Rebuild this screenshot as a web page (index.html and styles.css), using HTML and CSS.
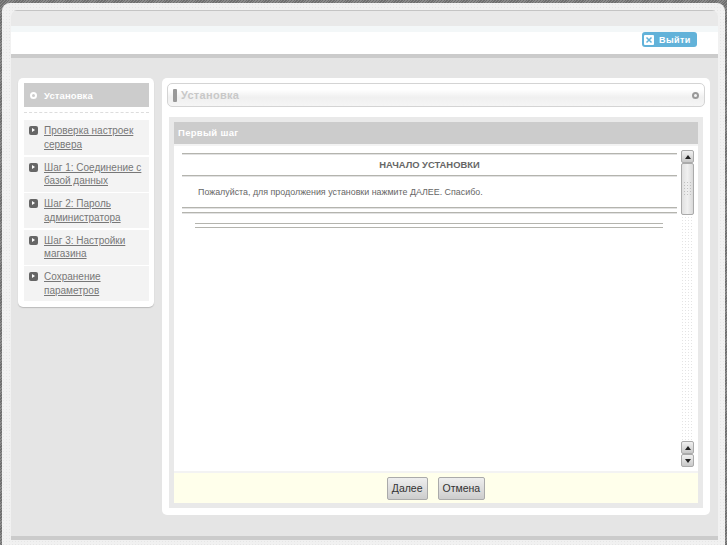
FILE: index.html
```html
<!DOCTYPE html>
<html lang="ru">
<head>
  <meta charset="UTF-8" />
  <title>Установка</title>
  <link rel="stylesheet" href="styles.css">
</head>
<body>
  <div class="frame">
    <div class="header">
      <div class="header-top"></div>
      <div class="header-bar">
        <a class="logout" href="#">
          <svg class="logout-icon" width="10" height="10" viewBox="0 0 10 10">
            <rect width="10" height="10" rx="1" fill="#fff"/>
            <path d="M2.5 2.5l5 5M7.5 2.5l-5 5" stroke="#62b2d9" stroke-width="1.5"/>
          </svg>
          Выйти
        </a>
      </div>
    </div>

    <div class="content">
      <div class="sidebar">
        <div class="side-head">
          <span class="side-dot"></span>
          Установка
        </div>
        <div class="side-sep"></div>
        <a class="side-item" href="#"><span class="side-icon"></span><span class="side-link">Проверка настроек сервера</span></a>
        <a class="side-item" href="#"><span class="side-icon"></span><span class="side-link">Шаг 1: Соединение с базой данных</span></a>
        <a class="side-item" href="#"><span class="side-icon"></span><span class="side-link">Шаг 2: Пароль администратора</span></a>
        <a class="side-item" href="#"><span class="side-icon"></span><span class="side-link">Шаг 3: Настройки магазина</span></a>
        <a class="side-item" href="#"><span class="side-icon"></span><span class="side-link">Сохранение параметров</span></a>
      </div>

      <div class="main">
        <div class="title-bar">
          <span class="title-mark"></span>
          <span class="title-text">Установка</span>
          <span class="title-dot"></span>
        </div>

        <div class="panel">
          <div class="panel-head">Первый шаг</div>
          <div class="panel-body">
            <div class="text-area">
              <div class="rule"></div>
              <div class="start-title">НАЧАЛО УСТАНОВКИ</div>
              <div class="rule"></div>
              <p class="start-text">Пожалуйста, для продолжения установки нажмите ДАЛЕЕ. Спасибо.</p>
              <div class="rule"></div>
              <div class="rule rule-second"></div>
              <div class="rule-inset"></div>
            </div>
            <div class="scrollbar">
              <div class="scroll-btn"><span class="arrow-up"></span></div>
              <div class="scroll-thumb">
                <span class="grip"></span>
              </div>
              <div class="scroll-track"></div>
              <div class="scroll-btn"><span class="arrow-up"></span></div>
              <div class="scroll-btn"><span class="arrow-down"></span></div>
            </div>
          </div>
          <div class="panel-foot">
            <button class="btn">Далее</button>
            <button class="btn">Отмена</button>
          </div>
        </div>
      </div>
    </div>
  </div>
</body>
</html>
```

FILE: styles.css
```css
/* ---------------- GENERAL ---------------- */
html, body {
  margin: 0;
  height: 100%;
  overflow: hidden;
}

body {
  background: repeating-linear-gradient(135deg, #6f6f6f 0, #6f6f6f 1px, #8a8a8a 1px, #8a8a8a 2px);
  padding: 3px 2px 0 2px;
  box-sizing: border-box;
  font-family: "Liberation Sans", sans-serif;
}

.frame {
  height: 542px;
  box-sizing: border-box;
  padding: 7px 7px 0 9px;
  border-radius: 8px 8px 0 0;
  background-color: #f1f1f1;
  background-image: radial-gradient(#e6e6e6 1px, transparent 1px);
  background-size: 3px 3px;
}

/* ---------------- HEADER ---------------- */
.header {
  height: 44px;
  background: #fff;
  border-radius: 6px 6px 0 0;
  overflow: hidden;
}

.header-top {
  height: 15px;
  background: #e9e9e9;
  border-top: 1px solid #c4c4c4;
  box-shadow: 0 6px 0 #f3f7f8;
}

.header-bar {
  display: flex;
  justify-content: flex-end;
  padding: 6px 21px 0 0;
}

.logout {
  display: flex;
  align-items: center;
  gap: 5px;
  width: 55px;
  height: 15px;
  box-sizing: border-box;
  padding-left: 2px;
  background: #62b2d9;
  border-radius: 3px;
  color: #fff;
  font-size: 9px;
  font-weight: bold;
  letter-spacing: 0.4px;
  text-decoration: none;
}

/* ---------------- CONTENT ---------------- */
.content {
  display: flex;
  align-items: flex-start;
  gap: 8px;
  height: 486px;
  box-sizing: border-box;
  padding: 20px 8px 0 7px;
  background: #e5e5e5;
  border-top: 4px solid #cbcbcb;
  border-bottom: 4px solid #cbcbcb;
}

.sidebar {
  width: 136px;
  height: 229px;
  box-sizing: border-box;
  padding: 5px 5px 0 6px;
  background: #fff;
  border-radius: 5px;
  box-shadow: 0 1px 1px #bbb;
}

.side-head {
  display: flex;
  align-items: center;
  gap: 7px;
  height: 24px;
  padding-left: 6px;
  background: #ccc;
  color: #fff;
  font-size: 9.5px;
  font-weight: bold;
  letter-spacing: 0.1px;
}

.side-dot {
  width: 3px;
  height: 3px;
  border: 2px solid #fff;
  border-radius: 50%;
}

.side-sep {
  margin: 5px 0 7px 0;
  border-top: 1px dashed #ddd;
}

.side-item {
  display: flex;
  gap: 6px;
  height: 35px;
  box-sizing: border-box;
  margin-bottom: 1.5px;
  padding: 4px 5px 0 5px;
  background: #f3f3f3;
  color: #777;
  font-size: 10px;
  line-height: 13.5px;
  text-decoration: none;
}

.side-icon {
  flex: none;
  position: relative;
  width: 9px;
  height: 9px;
  margin-top: 2px;
  background: #666;
  border-radius: 2px;
}

.side-icon::after {
  content: "";
  position: absolute;
  left: 3px;
  top: 2px;
  border-left: 3px solid #fff;
  border-top: 2.5px solid transparent;
  border-bottom: 2.5px solid transparent;
}

.side-link {
  text-decoration: underline;
}

/* ---------------- MAIN ---------------- */
.main {
  width: 548px;
  height: 437px;
  box-sizing: border-box;
  padding: 5px;
  background: #fff;
  border-radius: 5px;
}

.title-bar {
  display: flex;
  align-items: center;
  height: 24px;
  box-sizing: border-box;
  padding: 0 5px 0 5px;
  border: 1px solid #d4d4d4;
  border-radius: 5px;
  background: linear-gradient(#fff 0, #fff 25%, #f0f0f0 60%, #f5f5f5 100%);
}

.title-mark {
  width: 4px;
  height: 13px;
  margin-right: 4px;
  background: #999;
  border-radius: 1px;
}

.title-text {
  flex: 1;
  color: #c8c8c8;
  font-size: 11px;
  font-weight: bold;
  letter-spacing: 0.3px;
}

.title-dot {
  width: 3px;
  height: 3px;
  border: 2px solid #999;
  border-radius: 50%;
}

.panel {
  margin: 10px 2px 0 2px;
  height: 391px;
  box-sizing: border-box;
  padding: 5px;
  background: #e9e9e9;
}

.panel-head {
  height: 22px;
  padding-left: 4px;
  background: #ccc;
  color: #fff;
  font-size: 9.5px;
  font-weight: bold;
  letter-spacing: 0.3px;
  line-height: 21px;
}

.panel-body {
  display: flex;
  height: 329px;
  box-sizing: border-box;
  padding: 4px 4px 4px 8px;
  background: #fff;
  border-top: 2px solid #f3f3f3;
  border-bottom: 2px solid #f3f3f3;
}

.text-area {
  flex: 1;
  padding: 3px 4px 0 0;
  color: #666;
}

.rule {
  height: 1px;
  background: #b4b4ae;
  border-bottom: 1px solid #e2e2e2;
}

.rule-second {
  margin-top: 3px;
}

.rule-inset {
  height: 1px;
  margin: 9px 14px 0 13px;
  border-top: 1px solid #b4b4ae;
  border-bottom: 1px solid #b4b4ae;
  padding-top: 2px;
}

.start-title {
  height: 20px;
  color: #666;
  font-size: 9.4px;
  font-weight: bold;
  line-height: 20px;
  text-align: center;
}

.start-text {
  height: 30px;
  margin: 0;
  padding: 10px 0 0 16px;
  box-sizing: border-box;
  font-size: 8.9px;
  line-height: 11px;
}

.scrollbar {
  flex: none;
  display: flex;
  flex-direction: column;
  width: 13px;
  background-image: radial-gradient(#e4e4e4 0.6px, transparent 0.6px);
  background-size: 3px 3px;
}

.scroll-btn {
  display: flex;
  align-items: center;
  justify-content: center;
  height: 13px;
  box-sizing: border-box;
  background: linear-gradient(#f0f0f0, #c8c8c8);
  border: 1px solid #aaa;
  border-radius: 2px;
}

.scroll-thumb {
  display: flex;
  align-items: center;
  justify-content: center;
  height: 52px;
  box-sizing: border-box;
  background: linear-gradient(90deg, #e0e0e0, #f0f0f0 50%, #d9d9d9);
  border: 1px solid #aaa;
  border-radius: 2px;
}

.grip {
  width: 9px;
  height: 16px;
  background-image: radial-gradient(#c0c0c0 0.8px, transparent 0.8px);
  background-size: 3px 3px;
}

.scroll-track {
  flex: 1;
}

.arrow-up {
  border-left: 3.5px solid transparent;
  border-right: 3.5px solid transparent;
  border-bottom: 4px solid #222;
}

.arrow-down {
  border-left: 3.5px solid transparent;
  border-right: 3.5px solid transparent;
  border-top: 4px solid #222;
}

.panel-foot {
  display: flex;
  justify-content: center;
  align-items: center;
  gap: 10px;
  height: 30px;
  background: #ffffeb;
}

.btn {
  height: 23px;
  padding: 0 4px;
  background: linear-gradient(#eee, #cdcdcd);
  border: 1px solid #aaa;
  border-radius: 2px;
  color: #333;
  font-family: "Liberation Sans", sans-serif;
  font-size: 10.5px;
}
```
